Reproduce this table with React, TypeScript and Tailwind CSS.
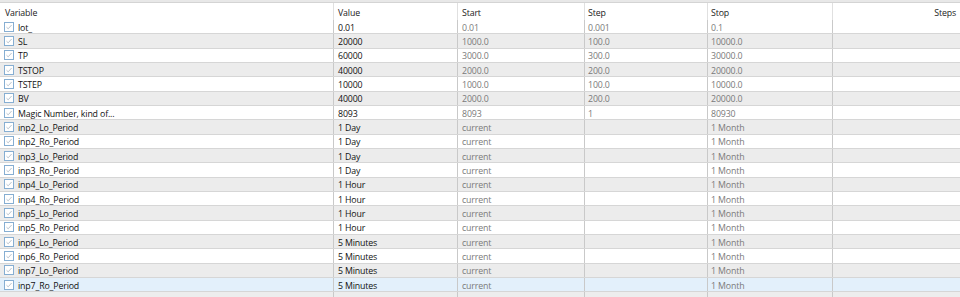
import React from "react";

type Row = { name: string; value: string; start: string; step: string; stop: string };

const rows: Row[] = [
  { name: "lot_", value: "0.01", start: "0.01", step: "0.001", stop: "0.1" },
  { name: "SL", value: "20000", start: "1000.0", step: "100.0", stop: "10000.0" },
  { name: "TP", value: "60000", start: "3000.0", step: "300.0", stop: "30000.0" },
  { name: "TSTOP", value: "40000", start: "2000.0", step: "200.0", stop: "20000.0" },
  { name: "TSTEP", value: "10000", start: "1000.0", step: "100.0", stop: "10000.0" },
  { name: "BV", value: "40000", start: "2000.0", step: "200.0", stop: "20000.0" },
  { name: "Magic Number, kind of...", value: "8093", start: "8093", step: "1", stop: "80930" },
  { name: "inp2_Lo_Period", value: "1 Day", start: "current", step: "", stop: "1 Month" },
  { name: "inp2_Ro_Period", value: "1 Day", start: "current", step: "", stop: "1 Month" },
  { name: "inp3_Lo_Period", value: "1 Day", start: "current", step: "", stop: "1 Month" },
  { name: "inp3_Ro_Period", value: "1 Day", start: "current", step: "", stop: "1 Month" },
  { name: "inp4_Lo_Period", value: "1 Hour", start: "current", step: "", stop: "1 Month" },
  { name: "inp4_Ro_Period", value: "1 Hour", start: "current", step: "", stop: "1 Month" },
  { name: "inp5_Lo_Period", value: "1 Hour", start: "current", step: "", stop: "1 Month" },
  { name: "inp5_Ro_Period", value: "1 Hour", start: "current", step: "", stop: "1 Month" },
  { name: "inp6_Lo_Period", value: "5 Minutes", start: "current", step: "", stop: "1 Month" },
  { name: "inp6_Ro_Period", value: "5 Minutes", start: "current", step: "", stop: "1 Month" },
  { name: "inp7_Lo_Period", value: "5 Minutes", start: "current", step: "", stop: "1 Month" },
  { name: "inp7_Ro_Period", value: "5 Minutes", start: "current", step: "", stop: "1 Month" },
];

function Check() {
  return (
    <span className="flex h-[10px] w-[10px] shrink-0 items-center justify-center border border-[#86aed2] bg-white">
      <svg width="8" height="8" viewBox="0 0 8 8">
        <path d="M1.5 4.2 L3.2 5.8 L6.6 2" fill="none" stroke="#b0bcc8" strokeWidth="0.9" />
      </svg>
    </span>
  );
}

const grid = "grid grid-cols-[334px_124px_127px_123px_125px_1fr]";
const txt = "pt-[3px]";

export default function App() {
  return (
    <div
      className="h-[297px] w-[960px] overflow-hidden bg-[#ededed] text-[8.8px] leading-none tracking-[-0.15px]"
      style={{ fontFamily: '"Open Sans", "Noto Sans", sans-serif' }}
    >
      <div className="h-[3px] border-b border-[#d4d4d4] bg-[#e8e8e8]" />
      <div className={`${grid} h-[17px] bg-white text-[#222]`}>
        <div className="flex items-center border-r border-[#e0e0e0] pl-[5px]"><span className={txt}>Variable</span></div>
        <div className="flex items-center border-r border-[#e0e0e0] pl-[4px]"><span className={txt}>Value</span></div>
        <div className="flex items-center border-r border-[#e0e0e0] pl-[4px]"><span className={txt}>Start</span></div>
        <div className="flex items-center border-r border-[#e0e0e0] pl-[3px]"><span className={txt}>Step</span></div>
        <div className="flex items-center border-r border-[#e0e0e0] pl-[3px]"><span className={txt}>Stop</span></div>
        <div className="flex items-center justify-end pr-[4px]"><span className={txt}>Steps</span></div>
      </div>
      {rows.map((r, i) => {
        const last = i === rows.length - 1;
        const bg = last ? "bg-[#e3f0fb]" : i % 2 === 0 ? "bg-white" : "bg-[#ececec]";
        return (
          <div key={r.name} className={`${grid} h-[14.33px] border-b border-[#d6d6d6] ${bg}`}>
            <div className="flex items-center gap-[4px] border-r border-[#c9c9c9] pl-[4px] text-[#111]">
              <Check />
              <span className={txt}>{r.name}</span>
            </div>
            <div className="flex items-center border-r border-[#c9c9c9] pl-[4px] text-[#111]"><span className={txt}>{r.value}</span></div>
            <div className="flex items-center border-r border-[#c9c9c9] pl-[4px] text-[#7a7a7a]"><span className={txt}>{r.start}</span></div>
            <div className="flex items-center border-r border-[#c9c9c9] pl-[3px] text-[#7a7a7a]"><span className={txt}>{r.step}</span></div>
            <div className="flex items-center border-r border-[#c9c9c9] pl-[3px] text-[#7a7a7a]"><span className={txt}>{r.stop}</span></div>
            <div />
          </div>
        );
      })}
      <div className={`${grid} h-[10px]`}>
        <div className="border-r border-[#c9c9c9]" />
        <div className="border-r border-[#c9c9c9]" />
        <div className="border-r border-[#c9c9c9]" />
        <div className="border-r border-[#c9c9c9]" />
        <div className="border-r border-[#c9c9c9]" />
        <div />
      </div>
    </div>
  );
}
